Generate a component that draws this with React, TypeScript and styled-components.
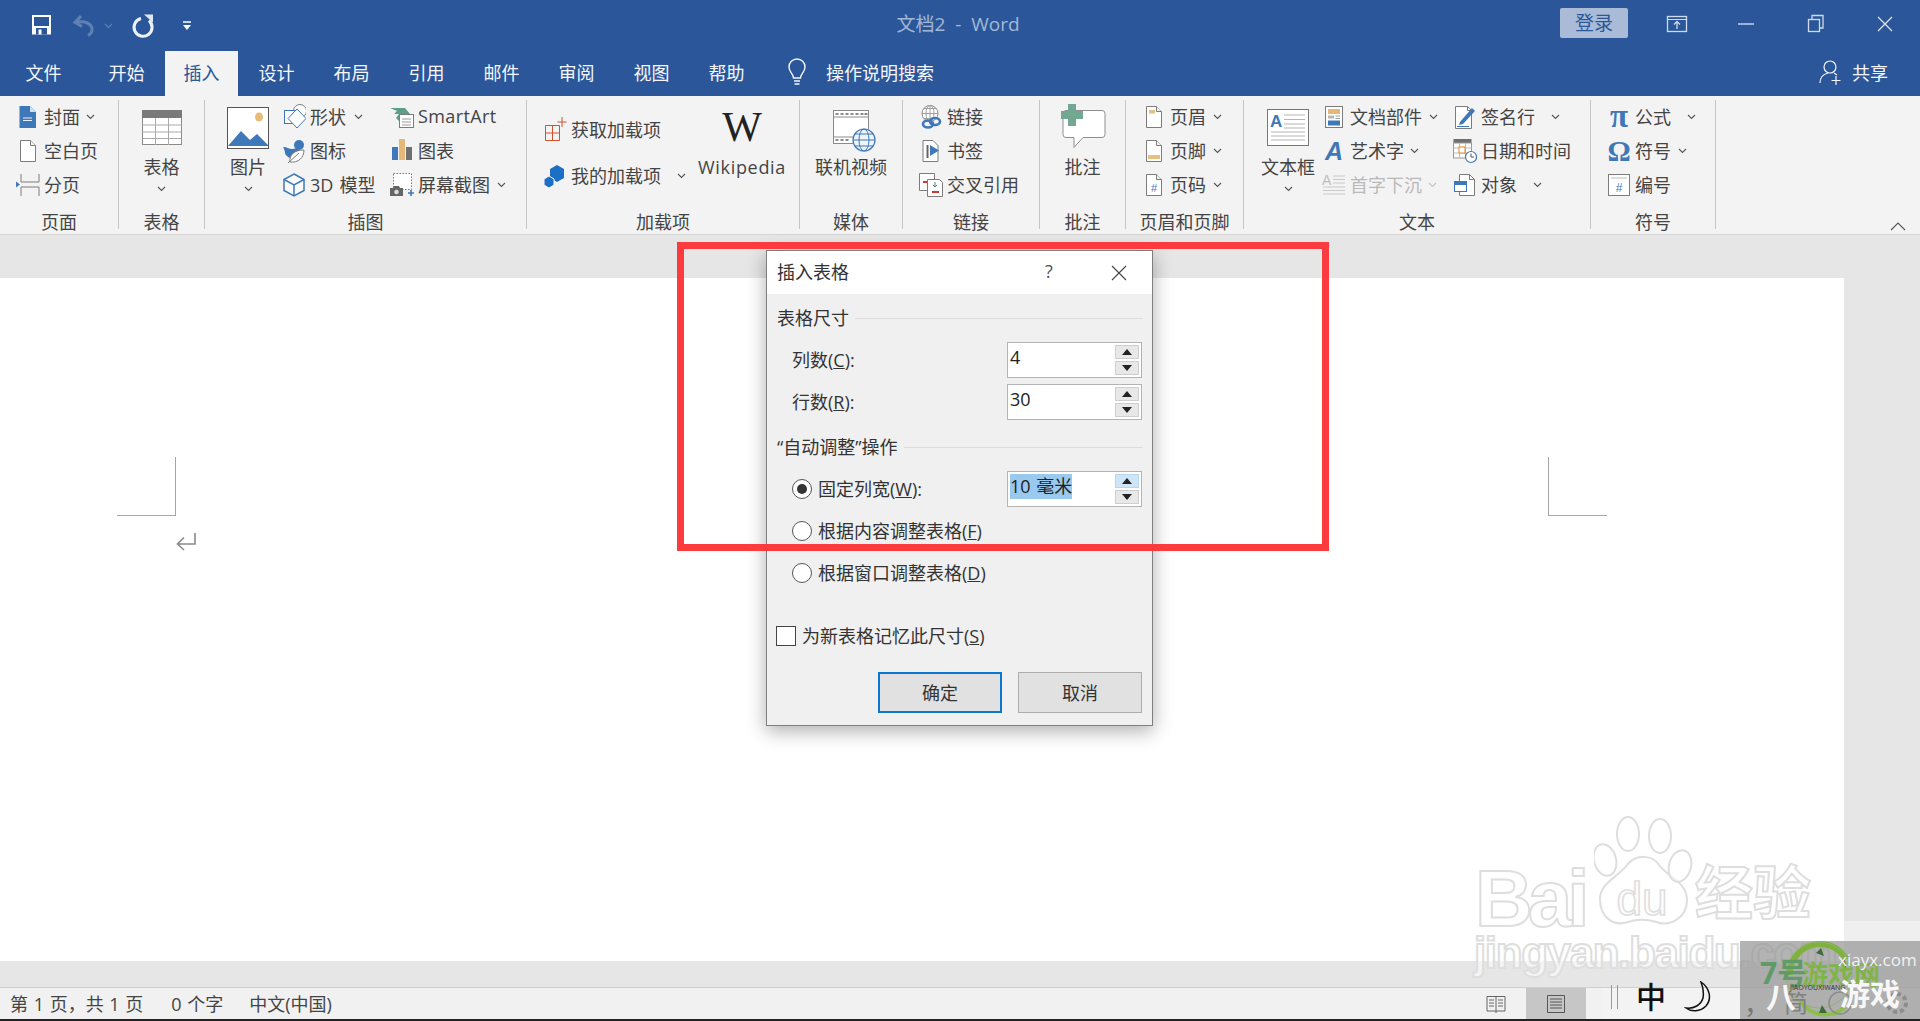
import React from "react";
import styled, { createGlobalStyle } from "styled-components";

const FONT = `"Open Sans","Noto Sans CJK SC",sans-serif`;
const BLUE = "#2b579a";
const IC = "#3f78b8";

const Global = createGlobalStyle`
  html, body { margin: 0; padding: 0; background: #fff; overflow: hidden; }
  body { font-family: ${FONT}; font-size: 18px; color: #444; }
  * { box-sizing: border-box; }
`;

const Screen = styled.div`
  position: relative; width: 1920px; height: 1021px; overflow: hidden;
  display: flex; flex-direction: column;
`;

/* title bar */
const TitleBar = styled.header`
  height: 51px; background: ${BLUE};
  display: grid; grid-template-columns: 1fr auto 1fr; align-items: center;
`;
const Qat = styled.div`display: flex; align-items: center; padding-left: 29px;`;
const QatItem = styled.span<{ $ml: number }>`display: flex; margin-left: ${p => p.$ml}px;`;
const DocTitle = styled.div`color: #a3b7d6; font-size: 19px; white-space: pre; margin-right: 4px; margin-top: -5px;`;
const WinArea = styled.div`display: flex; align-items: center; justify-content: flex-end;`;
const SignIn = styled.div`
  width: 68px; height: 30px; margin: -6px 14px 0 0; border-radius: 2px; background: #a9bbd6;
  color: ${BLUE}; display: flex; align-items: center; justify-content: center; font-size: 19px; padding-bottom: 2px;
`;
const WinBtn = styled.div`width: 69.5px; height: 30px; margin-top: -4px; display: flex; align-items: center; justify-content: center;`;

/* tabs */
const TabBar = styled.nav`
  height: 45px; background: ${BLUE}; display: flex; align-items: stretch; padding-left: 7px; padding-right: 32px;
`;
const Tab = styled.div<{ $active?: boolean; $first?: boolean }>`
  width: 73px; margin-right: ${p => (p.$first ? 10 : 2)}px;
  display: flex; align-items: center; justify-content: center;
  background: ${p => (p.$active ? "#f3f3f3" : "transparent")};
  color: ${p => (p.$active ? BLUE : "#f4f6fa")}; font-size: 18px; padding-bottom: 3px;
`;
const Search = styled.div`display: flex; align-items: center; margin-left: 22px; color: #f4f6fa; gap: 19px; padding-bottom: 3px;`;
const Share = styled.div`margin-left: auto; display: flex; align-items: center; gap: 9px; color: #f4f6fa; padding-bottom: 3px;`;

/* ribbon */
const Ribbon = styled.section`
  position: relative; height: 139px; background: #f3f3f3; border-bottom: 1px solid #d4d4d4;
  display: flex; align-items: flex-start; padding-top: 4px;
`;
const Group = styled.div<{ $w: number }>`
  width: ${p => p.$w}px; height: 129px; border-right: 1px solid #c6c6c6; display: flex; flex-direction: column;
`;
const GroupBody = styled.div<{ $pl?: number }>`
  flex: 1; display: flex; align-items: flex-start; padding-left: ${p => p.$pl ?? 0}px;
`;
const GroupLabel = styled.div`
  height: 16px; line-height: 16px; text-align: center; font-size: 18px; color: #444; white-space: nowrap; padding-top: 1px;
`;
const Big = styled.div<{ $w: number }>`
  width: ${p => p.$w}px; flex: none; display: flex; flex-direction: column; align-items: center;
`;
const BigIcon = styled.div`height: 58px; display: flex; justify-content: center; align-items: flex-start;`;
const BigText = styled.div`height: 18px; line-height: 18px; font-size: 18px; white-space: nowrap;`;
const BigChev = styled.div`margin-top: 10px; display: flex;`;
const Col = styled.div<{ $w?: number; $mt?: number }>`
  width: ${p => (p.$w ? `${p.$w}px` : "auto")}; flex: none; margin-top: ${p => p.$mt ?? 0}px; display: flex; flex-direction: column;
`;
const Row = styled.div<{ $h?: number; $off?: boolean }>`
  height: ${p => p.$h ?? 34}px; display: flex; align-items: center; white-space: nowrap;
  color: ${p => (p.$off ? "#b9b9b9" : "#444")};
`;
const RowText = styled.span`margin-bottom: 3px; word-spacing: 1.5px;`;
const Slot = styled.span`width: 32px; height: 26px; flex: none; display: flex; align-items: center; justify-content: center;`;
const ChevBox = styled.span<{ $ml: number }>`display: flex; margin-left: ${p => p.$ml}px;`;
const Latin = styled.span`letter-spacing: 0.4px;`;
const WikiLatin = styled.span`letter-spacing: 0.7px;`;
const WikiW = styled.div`
  font-family: "Liberation Serif", serif; font-weight: 400; font-size: 42px; line-height: 54px; color: #222; height: 58px;
`;
const Collapse = styled.span`position: absolute; right: 14px; bottom: 3px; display: flex;`;

/* document */
const DocArea = styled.main`
  flex: 1; background: #e6e6e6; padding-top: 43px; display: flex; flex-direction: column;
`;
const DocMain = styled.div`height: 683px; display: flex;`;
const Page = styled.div`width: 1844px; background: #fff; padding: 179px 237px 0 117px;`;
const Side = styled.div`flex: 1; display: flex; flex-direction: column; justify-content: flex-end;`;
const SideFoot = styled.div`height: 40px; background: #efefef;`;
const Marks = styled.div`display: flex; justify-content: space-between;`;
const Mark = styled.div<{ $right?: boolean }>`
  width: 59px; height: 59px; border-bottom: 1px solid #a6a6a6;
  ${p => (p.$right ? "border-left: 1px solid #a6a6a6;" : "border-right: 1px solid #a6a6a6;")}
`;
const Para = styled.div`margin: 15px 0 0 57px; display: flex;`;

/* status */
const StatusBar = styled.footer`
  height: 34px; background: #f1f1f1; border-top: 1px solid #cfcfcf; border-bottom: 2px solid #222;
  display: flex; align-items: center; padding: 0 334px 0 10px; font-size: 18px; color: #444;
`;
const StatusText = styled.span<{ $ml?: number }>`margin-left: ${p => p.$ml ?? 0}px; white-space: nowrap; word-spacing: 1px; margin-bottom: 2px;`;
const ViewSwitch = styled.div`margin-left: auto; height: 100%; display: flex;`;
const ViewBtn = styled.div<{ $active?: boolean }>`
  width: 60px; display: flex; align-items: center; justify-content: center;
  background: ${p => (p.$active ? "#c6c6c6" : "transparent")};
`;

/* dialog */
const Dialog = styled.div`
  position: absolute; left: 766px; top: 250px; width: 387px; height: 476px;
  background: #f0f0f0; border: 1px solid #7f7f7f; box-shadow: 0 5px 18px rgba(0,0,0,.32);
  display: flex; flex-direction: column; color: #333;
`;
const DlgHead = styled.div`
  height: 43px; background: #fff; display: flex; align-items: center; padding: 0 0 0 10px; font-size: 18px;
`;
const DlgTitle = styled.span`flex: 1; margin-bottom: 3px;`;
const Help = styled.span`width: 20px; text-align: center; color: #555; margin: 0 52px 3px 0;`;
const DlgClose = styled.span`display: flex; margin-right: 25px;`;
const DlgBody = styled.div`flex: 1; padding: 15px 0 0 0; display: flex; flex-direction: column;`;
const Section = styled.div<{ $mt?: number }>`
  height: 18px; line-height: 18px; margin: ${p => p.$mt ?? 0}px 9px 0 10px; display: flex; align-items: center; gap: 6px; white-space: nowrap;
`;
const SectionLine = styled.span`flex: 1; height: 1px; background: #dcdcdc;`;
const FieldRow = styled.div<{ $mt: number }>`
  height: 36px; margin-top: ${p => p.$mt}px; padding: 0 10px 0 25px; display: flex; align-items: center; white-space: nowrap;
`;
const DlgText = styled.span`margin-bottom: 2px;`;
const Field = styled.div`
  margin-left: auto; width: 135px; height: 36px; background: #fff; border: 1px solid #b4b4b4;
  display: flex; padding: 2px;
`;
const FieldValue = styled.div`flex: 1; line-height: 24px; font-size: 18px; color: #222;`;
const Selected = styled.span`display: inline-block; background: #99c9ef; height: 25px; line-height: 24px; word-spacing: 1px;`;
const Spin = styled.div`width: 24px; display: flex; flex-direction: column; gap: 2px;`;
const SpinBtn = styled.div<{ $hot?: boolean }>`
  flex: 1; background: ${p => (p.$hot ? "#cde6f7" : "#e8e8e8")}; border: 1px solid ${p => (p.$hot ? "#b5d6ee" : "#cfcfcf")};
  display: flex; align-items: center; justify-content: center;
`;
const Radio = styled.span<{ $on?: boolean }>`
  width: 20px; height: 20px; flex: none; margin-right: 6px; border-radius: 50%; background: #fff; border: 1px solid #555;
  display: flex; align-items: center; justify-content: center;
  &::after { content: ""; width: 10px; height: 10px; border-radius: 50%; background: ${p => (p.$on ? "#333" : "transparent")}; }
`;
const CheckRow = styled.div`height: 36px; margin-top: 27px; padding-left: 9px; display: flex; align-items: center; white-space: nowrap;`;
const Check = styled.span`width: 20px; height: 20px; margin-right: 6px; background: #fff; border: 1px solid #444;`;
const Actions = styled.div`margin-top: 18px; padding-right: 10px; display: flex; justify-content: flex-end; gap: 16px;`;
const Btn = styled.div<{ $primary?: boolean }>`
  width: 124px; height: 41px; background: #e1e1e1; display: flex; align-items: center; justify-content: center;
  border: ${p => (p.$primary ? "2px solid #0a78d0" : "1px solid #adadad")}; color: #333; padding-bottom: 2px;
`;

/* overlays */
const RedBox = styled.div`
  position: absolute; left: 677px; top: 242px; width: 652px; height: 309px; border: 7px solid #fb3b3e; pointer-events: none;
`;
const BaiduMark = styled.div`
  position: absolute; left: 1474px; top: 815px; width: 360px; height: 180px; pointer-events: none;
`;
const OutlineText = styled.span<{ $x: number; $y: number; $size: number; $ls?: number; $bold?: boolean }>`
  position: absolute; left: ${p => p.$x}px; top: ${p => p.$y}px; font-size: ${p => p.$size}px; line-height: 1; white-space: nowrap;
  font-family: "Liberation Sans","Noto Sans CJK SC",sans-serif; font-weight: ${p => (p.$bold ? 700 : 400)};
  letter-spacing: ${p => p.$ls ?? 0}px;
  color: rgba(255,255,255,.6); -webkit-text-stroke: 2px #dedede;
`;
const Paw = styled.svg`position: absolute; left: 120px; top: 0;`;
const Ime = styled.div`
  position: absolute; left: 1602px; top: 988px; width: 138px; height: 31px; background: #f3f3f3;
`;
const ImeBar = styled.div`
  position: absolute; left: 1602px; top: 978px; height: 38px; display: flex; align-items: center; pointer-events: none;
`;
const ImeGrips = styled.span`width: 7px; height: 24px; margin-left: 9px; border-left: 1px solid #999; border-right: 1px solid #999;`;
const ImeZh = styled.span`margin-left: 18px; font-size: 30px; font-weight: 500; line-height: 30px; color: #111;`;
const ImeMoon = styled.span`display: flex; margin-left: 18px;`;
const MarkBox = styled.div`
  position: absolute; left: 1740px; top: 941px; width: 180px; height: 78px; background: rgba(150,150,150,.72); overflow: hidden;
`;
const MarkFloat = styled.span<{ $x: number; $y: number; $size: number; $c: string; $w?: number }>`
  position: absolute; left: ${p => p.$x}px; top: ${p => p.$y}px; font-size: ${p => p.$size}px; line-height: 1; color: ${p => p.$c};
  font-weight: ${p => p.$w ?? 400}; white-space: nowrap;
`;
const MarkArt = styled.svg`position: absolute; left: 0; top: 0;`;

/* icons */
const Chev = ({ c = "#555" }: { c?: string }) => (
  <svg width="9" height="6" viewBox="0 0 9 6"><path d="M1 1l3.5 3.5L8 1" fill="none" stroke={c} strokeWidth="1.1" /></svg>
);
const Ico = ({ children }: { children: React.ReactNode }) => (
  <svg width="24" height="26" viewBox="0 0 24 26">{children}</svg>
);
const GR = "#7c7c7c";
const docP = "M4.5 2.5h10l5 5v16h-15z";
const Doc = () => (<><path d={docP} fill="#fff" stroke={GR} /><path d="M14.5 2.5v5h5" fill="#f3f3f3" stroke={GR} /></>);

const iCover = <Ico><path d="M3.5 2H14l6 6v16H3.5z" fill={IC} /><path d="M14 2v6h6z" fill="#cfe0f2" /><path d="M7 14h9M7 16.5h9" stroke="#e8f0f8" strokeWidth="1" /></Ico>;
const iBlank = <Ico><Doc /></Ico>;
const iBreak = <Ico><path d="M5 2v8h18V2M5 24V15h18v9" fill="none" stroke={GR} /><path d="M0 9.5l4 3-4 3z" fill={IC} /></Ico>;
const iShapes = <Ico><circle cx="18" cy="7" r="6.5" fill="#fff" stroke={GR} /><rect x="2.5" y="6.5" width="12" height="13" fill="#fff" stroke={IC} /><path d="M16 5l9 9.5-9 9.5-9-9.5z" transform="translate(-1 0)" fill="#fff" stroke={IC} /></Ico>;
const iIcons = <Ico><circle cx="17" cy="7" r="5" fill={IC} /><path d="M1 9c4 0 6 2 9 2l7-1c2 4 0 9-5 10-3 1-8-1-9-5 0-2-1-4-2-6z" fill={IC} /><path d="M8 24c-1-7 4-12 14-12 0 8-6 13-14 12z" fill="#fff" stroke={GR} /><path d="M6 25l11-10" stroke={GR} /></Ico>;
const iCube = <Ico><path d="M12 2l10 5.5v11L12 24 2 18.5v-11z" fill="#fbfbfb" stroke={IC} strokeWidth="1.5" /><path d="M2 7.5L12 13l10-5.5M12 13v11" fill="none" stroke={IC} strokeWidth="1.5" /></Ico>;
const iSmart = <Ico><path d="M0 4h15l5 6h-8l-3 7-3-3 3-4H4l3-3z" fill="#5c9e8a" /><rect x="9.5" y="10.5" width="14" height="13" fill="#fff" stroke={GR} /><path d="M12 15h9M12 18h9M12 21h9" stroke="#999" /></Ico>;
const iChart = <Ico><rect x="2" y="9" width="6" height="13" fill={IC} /><rect x="9" y="1" width="6" height="21" fill="#e6b877" /><rect x="16" y="9" width="6" height="13" fill="#6f6f6f" /></Ico>;
const iShot = <Ico><rect x="3.5" y="1.5" width="18" height="16" fill="#fff" stroke="#777" strokeDasharray="1.5 1.5" /><path d="M0 16h3l1-2h5l1 2h3v8H0z" fill="#666" /><circle cx="6.5" cy="20" r="2.3" fill="#ddd" /><path d="M18 21h6M21 18v6" stroke={IC} strokeWidth="1.6" /></Ico>;
const iAddGet = <Ico><path d="M2.5 8.5h14v15h-14zM2.5 16h14M9.500 8.500v15" fill="none" stroke="#d4512f" /><path d="M19 0v10M14.500 5h9" stroke="#d4512f" /></Ico>;
const iAddMy = <Ico><path d="M14 2l7 4v9l-7 4-7-4V6z" fill="#1c6fc2" /><path d="M6 13l5 3v6l-5 3-5-3v-6z" fill="#1c6fc2" stroke="#f3f3f3" /></Ico>;
const iLink = <Ico><circle cx="11" cy="9.5" r="8" fill="#fff" stroke="#8a8a8a" /><path d="M3 9.5h16M11 1.5v16M5 4.5h12M5 14.500h12" stroke="#a0a0a0" /><ellipse cx="11" cy="9.5" rx="4" ry="8" fill="none" stroke="#a0a0a0" /><ellipse cx="9" cy="20" rx="5" ry="3.5" fill="none" stroke={IC} strokeWidth="2.6" /><ellipse cx="16" cy="17.500" rx="5" ry="3.5" fill="none" stroke={IC} strokeWidth="2.6" /></Ico>;
const iMark = <Ico><path d="M4 2.5h10l5 5v16H4z" fill="#fff" stroke={GR} /><path d="M8.500 7v13" stroke="#666" strokeWidth="2" /><path d="M11 7l9 5.5-9 5.5z" fill={IC} /></Ico>;
const iCross = <Ico><path d="M0.5 1.5h15v17H0.5z" fill="#fff" stroke={GR} /><path d="M4 10h6" stroke="#d0392f" strokeWidth="2" /><path d="M8.5 7.5h12l3 3v14h-15z" fill="#fff" stroke={GR} /><path d="M16 10v5M14 13l2 2 2-2" fill="none" stroke="#4a8f6f" /><path d="M13 20h7" stroke="#d0392f" strokeWidth="2" /></Ico>;
const iHead = <Ico><Doc /><rect x="7" y="6" width="6" height="3.5" fill="#e6c07f" /></Ico>;
const iFoot = <Ico><Doc /><rect x="6" y="17" width="12" height="4" fill="#e6c07f" /></Ico>;
const iNum = <Ico><Doc /><text x="12" y="20" fontSize="11" textAnchor="middle" fill={IC} fontFamily="Liberation Sans">#</text></Ico>;
const iParts = <Ico><rect x="3.5" y="2.5" width="17" height="21" fill="#fff" stroke={GR} /><rect x="6" y="5" width="12" height="5" fill="#e6b877" /><rect x="6" y="11.5" width="6" height="3" fill="#b7b7b7" /><path d="M13.5 12h4.500M13.5 14.500h4.500" stroke="#999" /><rect x="6" y="16.5" width="12" height="5" fill={IC} /></Ico>;
const iArt = <Ico><text x="12" y="22" fontSize="25" fontWeight="700" fontStyle="italic" textAnchor="middle" fill={IC} fontFamily="Liberation Sans">A</text></Ico>;
const iDrop = <Ico><text x="0" y="13" fontSize="14" fill="#bdbdbd" fontFamily="Liberation Sans">A</text><path d="M11 4h12M11 7.500h12M11 11h12M1 15h22M1 18.500h22M1 22h22" stroke="#c9c9c9" /></Ico>;
const iSign = <Ico><path d="M2.5 2.5h12l4 4v18h-16z" fill="#fff" stroke={GR} /><path d="M14.5 2.5v4h4" fill="none" stroke={GR} /><path d="M7 18L19 4l3 3-12 13-4 1z" fill={IC} /><path d="M4 22.5h12" stroke={IC} /></Ico>;
const iDate = <Ico><rect x="0.5" y="1" width="18" height="4" fill="#6f6f6f" /><rect x="0.5" y="5" width="18" height="15" fill="#fff" stroke="#999" /><path d="M6.5 5v15M12.5 5v15M0.5 10h18M0.5 15h18" stroke="#bbb" /><rect x="6" y="9" width="6" height="6" fill="#fff" stroke="#e08a2c" /><circle cx="18" cy="19" r="5.5" fill="#fff" stroke={IC} strokeWidth="1.2" /><path d="M18 15.5V19h3" fill="none" stroke="#555" /></Ico>;
const iObj = <Ico><path d="M6.5 2.5h10l5 5v16h-15z" fill="#fff" stroke={GR} /><path d="M16.5 2.5v5h5" fill="none" stroke={GR} /><rect x="1.5" y="9.5" width="12" height="10" fill="#fff" stroke={IC} /><rect x="1" y="9" width="13" height="4" fill={IC} /></Ico>;
const iPi = <Ico><text x="12" y="23" fontSize="33" fontWeight="700" textAnchor="middle" fill={IC} fontFamily="Liberation Serif">π</text></Ico>;
const iOm = <Ico><text x="12" y="23" fontSize="29" fontWeight="700" textAnchor="middle" fill={IC} fontFamily="Liberation Serif">Ω</text></Ico>;
const iHash = <Ico><rect x="1.5" y="2.5" width="21" height="21" fill="#fff" stroke={GR} /><path d="M4 6h16" stroke="#bbb" /><text x="12" y="20" fontSize="12" textAnchor="middle" fill={IC} fontFamily="Liberation Sans">#</text></Ico>;

const BigTable = (
  <svg width="44" height="58" viewBox="0 0 44 58">
    <rect x="2.5" y="10.5" width="39" height="34" fill="#fff" stroke="#8a8a8a" />
    <rect x="2" y="10" width="40" height="8" fill="#7a7a7a" />
    <path d="M2.5 25h39M2.5 32h39M2.5 38.5h39M15.5 18v27M28.5 18v27" stroke="#aaa" />
  </svg>
);
const BigPic = (
  <svg width="46" height="58" viewBox="0 0 46 58">
    <rect x="2.5" y="7.5" width="41" height="41" fill="#fff" stroke="#555" />
    <ellipse cx="34" cy="17" rx="4" ry="4.5" fill="#e8bb78" />
    <path d="M3 46l13-15 9 9 7-6 11 11v1H3z" fill={IC} />
  </svg>
);
const BigVideo = (
  <svg width="52" height="58" viewBox="0 0 52 58">
    <rect x="8.5" y="10.5" width="35" height="33" fill="#fff" stroke="#8a8a8a" />
    <path d="M8.5 17h35M8.5 37h35" stroke="#8a8a8a" />
    <path d="M12 13v2M17 13v2M22 13v2M27 13v2M32 13v2M37 13v2M41 13v2M12 39v2M17 39v2M22 39v2" stroke="#8a8a8a" strokeWidth="3" />
    <circle cx="39" cy="40" r="11" fill="#eef4fa" stroke={IC} strokeWidth="1.2" />
    <ellipse cx="39" cy="40" rx="5" ry="11" fill="none" stroke={IC} />
    <path d="M28 40h22M30 34h18M30 46h18" stroke={IC} />
  </svg>
);
const BigComment = (
  <svg width="52" height="58" viewBox="0 0 52 58">
    <path d="M9 10.5h36a3 3 0 0 1 3 3v21a3 3 0 0 1-3 3H26l-9 10v-10H9a3 3 0 0 1-3-3v-21a3 3 0 0 1 3-3z" fill="#fff" stroke="#8f8f8f" />
    <path d="M11 4h8v7h7v8h-7v7h-8v-7H4v-8h7z" fill="#72a892" />
  </svg>
);
const BigBox = (
  <svg width="46" height="58" viewBox="0 0 46 58">
    <rect x="2.5" y="9.5" width="41" height="36" fill="#fff" stroke="#777" />
    <text x="5" y="27" fontSize="17" fontWeight="700" fill={IC} fontFamily="Liberation Sans">A</text>
    <path d="M19 15h21M19 19.5h21M19 24h21M19 28h21M6 32h34M6 36h34M6 40h34" stroke="#b5b5b5" />
  </svg>
);

const Small = ({ icon, text, ml, off }: { icon: React.ReactNode; text: React.ReactNode; ml?: number; off?: boolean }) => (
  <Row $off={off}>
    <Slot>{icon}</Slot>
    <RowText>{text}</RowText>
    {ml !== undefined && <ChevBox $ml={ml}><Chev c={off ? "#c4c4c4" : "#555"} /></ChevBox>}
  </Row>
);
const BigBtn = ({ w, icon, text, chev }: { w: number; icon: React.ReactNode; text: string; chev?: boolean }) => (
  <Big $w={w}>
    <BigIcon>{icon}</BigIcon>
    <BigText>{text}</BigText>
    {chev && <BigChev><Chev /></BigChev>}
  </Big>
);

const TABS = ["开始", "插入", "设计", "布局", "引用", "邮件", "审阅", "视图", "帮助"];

export default function App() {
  return (
    <Screen>
      <Global />
      <TitleBar>
        <Qat>
          <QatItem $ml={0}>
            <svg width="24" height="26" viewBox="0 0 24 26"><path d="M3 2h19v19.500H3z" fill="#fff" /><rect x="5" y="4" width="15" height="9" fill="#2b579a" /><rect x="7" y="15" width="11" height="6.500" fill="#2b579a" /><rect x="9.500" y="16.500" width="3" height="5" fill="#fff" /></svg>
          </QatItem>
          <QatItem $ml={19}>
            <svg width="24" height="26" viewBox="0 0 24 26"><path d="M9 3L3 9.500l7 4M4 9.500c9-2 16 1 16 7 0 3-2 5-4 6" fill="none" stroke="#5f80b2" strokeWidth="3" /></svg>
          </QatItem>
          <QatItem $ml={8}><Chev c="#5f80b2" /></QatItem>
          <QatItem $ml={18}>
            <svg width="24" height="26" viewBox="0 0 24 26"><path d="M10 5.500a9 9 0 1 0 8 2" fill="none" stroke="#eef2f8" strokeWidth="3" /><path d="M13 1.500h9v8z" fill="#dfe7f2" /></svg>
          </QatItem>
          <QatItem $ml={26}>
            <svg width="12" height="12" viewBox="0 0 12 12"><path d="M2 2h8" stroke="#fff" strokeWidth="1.500" /><path d="M2 5h8L6 10z" fill="#fff" /></svg>
          </QatItem>
        </Qat>
        <DocTitle>文档2  -  Word</DocTitle>
        <WinArea>
          <SignIn>登录</SignIn>
          <WinBtn><svg width="22" height="20" viewBox="0 0 22 20"><rect x="1.5" y="2.5" width="19" height="15" fill="none" stroke="#cfdaeb" strokeWidth="1.3" /><path d="M1.5 5.5h19" stroke="#cfdaeb" /><path d="M11 15V8M8 10.500L11 7.500l3 3" fill="none" stroke="#cfdaeb" strokeWidth="1.3" /></svg></WinBtn>
          <WinBtn><svg width="18" height="4" viewBox="0 0 18 4"><path d="M1 2h16" stroke="#cfdaeb" strokeWidth="1.4" /></svg></WinBtn>
          <WinBtn><svg width="18" height="20" viewBox="0 0 18 20"><rect x="1.5" y="5.5" width="11" height="12" fill="none" stroke="#cfdaeb" strokeWidth="1.3" /><path d="M5 5V1.5h11V14h-3" fill="none" stroke="#cfdaeb" strokeWidth="1.3" /></svg></WinBtn>
          <WinBtn><svg width="18" height="18" viewBox="0 0 18 18"><path d="M2 2l14 14M16 2L2 16" stroke="#dfe6f1" strokeWidth="1.3" /></svg></WinBtn>
        </WinArea>
      </TitleBar>

      <TabBar>
        <Tab $first>文件</Tab>
        {TABS.map(t => <Tab key={t} $active={t === "插入"}>{t}</Tab>)}
        <Search>
          <svg width="20" height="28" viewBox="0 0 20 28"><path d="M6.5 20c0-4-4.500-6-4.500-11a8 8 0 0 1 16 0c0 5-4.500 7-4.500 11z" fill="none" stroke="#f4f6fa" strokeWidth="1.4" /><path d="M7 23h6M7.500 26h5" stroke="#f4f6fa" strokeWidth="1.5" /></svg>
          <span>操作说明搜索</span>
        </Search>
        <Share>
          <svg width="24" height="26" viewBox="0 0 24 26"><circle cx="11" cy="8" r="6" fill="none" stroke="#f4f6fa" strokeWidth="1.2" /><path d="M1 24c0-6 4-9 8-10M15 14l3 2" fill="none" stroke="#f4f6fa" strokeWidth="1.2" /><path d="M17 17v9M12.500 21.500h9" stroke="#f4f6fa" strokeWidth="1.2" /></svg>
          <span>共享</span>
        </Share>
      </TabBar>

      <Ribbon>
        <Group $w={119}>
          <GroupBody $pl={12}>
            <Col>
              <Small icon={iCover} text="封面" ml={6} />
              <Small icon={iBlank} text="空白页" />
              <Small icon={iBreak} text="分页" />
            </Col>
          </GroupBody>
          <GroupLabel>页面</GroupLabel>
        </Group>
        <Group $w={86}>
          <GroupBody><BigBtn w={85} icon={BigTable} text="表格" chev /></GroupBody>
          <GroupLabel>表格</GroupLabel>
        </Group>
        <Group $w={322}>
          <GroupBody $pl={13}>
            <BigBtn w={60} icon={BigPic} text="图片" chev />
            <Col $w={108}>
              <Small icon={iShapes} text="形状" ml={8} />
              <Small icon={iIcons} text="图标" />
              <Small icon={iCube} text="3D 模型" />
            </Col>
            <Col>
              <Small icon={iSmart} text={<Latin>SmartArt</Latin>} />
              <Small icon={iChart} text="图表" />
              <Small icon={iShot} text="屏幕截图" ml={7} />
            </Col>
          </GroupBody>
          <GroupLabel>插图</GroupLabel>
        </Group>
        <Group $w={273}>
          <GroupBody $pl={12}>
            <Col $w={153} $mt={7}>
              <Row $h={46}><Slot>{iAddGet}</Slot><RowText>获取加载项</RowText></Row>
              <Row $h={46}><Slot>{iAddMy}</Slot><RowText>我的加载项</RowText><ChevBox $ml={16}><Chev /></ChevBox></Row>
            </Col>
            <Big $w={100}>
              <BigIcon><WikiW>W</WikiW></BigIcon>
              <BigText><WikiLatin>Wikipedia</WikiLatin></BigText>
            </Big>
          </GroupBody>
          <GroupLabel>加载项</GroupLabel>
        </Group>
        <Group $w={103}>
          <GroupBody><BigBtn w={102} icon={BigVideo} text="联机视频" /></GroupBody>
          <GroupLabel>媒体</GroupLabel>
        </Group>
        <Group $w={137}>
          <GroupBody $pl={12}>
            <Col>
              <Small icon={iLink} text="链接" />
              <Small icon={iMark} text="书签" />
              <Small icon={iCross} text="交叉引用" />
            </Col>
          </GroupBody>
          <GroupLabel>链接</GroupLabel>
        </Group>
        <Group $w={86}>
          <GroupBody><BigBtn w={85} icon={BigComment} text="批注" /></GroupBody>
          <GroupLabel>批注</GroupLabel>
        </Group>
        <Group $w={118}>
          <GroupBody $pl={12}>
            <Col>
              <Small icon={iHead} text="页眉" ml={7} />
              <Small icon={iFoot} text="页脚" ml={7} />
              <Small icon={iNum} text="页码" ml={7} />
            </Col>
          </GroupBody>
          <GroupLabel>页眉和页脚</GroupLabel>
        </Group>
        <Group $w={347}>
          <GroupBody $pl={14}>
            <BigBtn w={60} icon={BigBox} text="文本框" chev />
            <Col $w={131}>
              <Small icon={iParts} text="文档部件" ml={7} />
              <Small icon={iArt} text="艺术字" ml={6} />
              <Small icon={iDrop} text="首字下沉" ml={6} off />
            </Col>
            <Col>
              <Small icon={iSign} text="签名行" ml={16} />
              <Small icon={iDate} text="日期和时间" />
              <Small icon={iObj} text="对象" ml={16} />
            </Col>
          </GroupBody>
          <GroupLabel>文本</GroupLabel>
        </Group>
        <Group $w={125}>
          <GroupBody $pl={12}>
            <Col>
              <Small icon={iPi} text="公式" ml={16} />
              <Small icon={iOm} text="符号" ml={7} />
              <Small icon={iHash} text="编号" />
            </Col>
          </GroupBody>
          <GroupLabel>符号</GroupLabel>
        </Group>
        <Collapse><svg width="16" height="10" viewBox="0 0 16 10"><path d="M1 9l7-7 7 7" fill="none" stroke="#555" strokeWidth="1.1" /></svg></Collapse>
      </Ribbon>

      <DocArea>
        <DocMain>
          <Page>
            <Marks><Mark /><Mark $right /></Marks>
            <Para><svg width="24" height="20" viewBox="0 0 24 20"><path d="M21 2v11H4M10 6.5L3.5 13l6.5 6" fill="none" stroke="#8a8a8a" strokeWidth="1.6" /></svg></Para>
          </Page>
          <Side><SideFoot /></Side>
        </DocMain>
      </DocArea>

      <StatusBar>
        <StatusText>第 1 页，共 1 页</StatusText>
        <StatusText $ml={28}>0 个字</StatusText>
        <StatusText $ml={26}>中文(中国)</StatusText>
        <ViewSwitch>
          <ViewBtn><svg width="20" height="20" viewBox="0 0 20 20"><path d="M1 2.5h18v14.500H1zM10 2.5V19M3 6h5M3 9h5M3 12h5M12 6h5M12 9h5M12 12h5" fill="none" stroke="#666" /></svg></ViewBtn>
          <ViewBtn $active><svg width="20" height="20" viewBox="0 0 20 20"><path d="M1.5 1.5h17v17h-17zM4 5h12M4 8h12M4 11h12M4 14h12" fill="none" stroke="#555" /></svg></ViewBtn>
        </ViewSwitch>
      </StatusBar>

      <Dialog>
        <DlgHead>
          <DlgTitle>插入表格</DlgTitle>
          <Help>?</Help>
          <DlgClose><svg width="16" height="16" viewBox="0 0 16 16"><path d="M1 1l14 14M15 1L1 15" stroke="#444" strokeWidth="1.1" /></svg></DlgClose>
        </DlgHead>
        <DlgBody>
          <Section>表格尺寸<SectionLine /></Section>
          <FieldRow $mt={15}>
            <DlgText>列数(<u>C</u>):</DlgText>
            <Field><FieldValue>4</FieldValue><Spin><SpinBtn><Up /></SpinBtn><SpinBtn><Down /></SpinBtn></Spin></Field>
          </FieldRow>
          <FieldRow $mt={6}>
            <DlgText>行数(<u>R</u>):</DlgText>
            <Field><FieldValue>30</FieldValue><Spin><SpinBtn><Up /></SpinBtn><SpinBtn><Down /></SpinBtn></Spin></Field>
          </FieldRow>
          <Section $mt={18}>“自动调整”操作<SectionLine /></Section>
          <FieldRow $mt={15}>
            <Radio $on /><DlgText>固定列宽(<u>W</u>):</DlgText>
            <Field><FieldValue><Selected>10 毫米</Selected></FieldValue><Spin><SpinBtn $hot><Up /></SpinBtn><SpinBtn><Down /></SpinBtn></Spin></Field>
          </FieldRow>
          <FieldRow $mt={6}><Radio /><DlgText>根据内容调整表格(<u>F</u>)</DlgText></FieldRow>
          <FieldRow $mt={6}><Radio /><DlgText>根据窗口调整表格(<u>D</u>)</DlgText></FieldRow>
          <CheckRow><Check /><DlgText>为新表格记忆此尺寸(<u>S</u>)</DlgText></CheckRow>
          <Actions>
            <Btn $primary>确定</Btn>
            <Btn>取消</Btn>
          </Actions>
        </DlgBody>
      </Dialog>

      <RedBox />

      <BaiduMark>
        <OutlineText $x={1} $y={44} $size={80} $ls={-5} $bold>Bai</OutlineText>
        <Paw width="110" height="120" viewBox="0 0 110 120">
          <g fill="#fff" fillOpacity=".6" stroke="#dedede" strokeWidth="2">
            <path d="M6 84c0-16 18-22 27-34 9-11 25-11 33 1 8 11 27 16 27 34 0 18-17 27-31 22-9-3-19-3-28 0C19 112 6 102 6 84z" />
            <ellipse cx="11" cy="45" rx="11" ry="16" transform="rotate(-15 11 45)" />
            <ellipse cx="34" cy="19" rx="11" ry="17" />
            <ellipse cx="66" cy="21" rx="11" ry="17" />
            <ellipse cx="86" cy="51" rx="11" ry="16" transform="rotate(15 86 51)" />
          </g>
          <text x="48" y="100" fontSize="46" textAnchor="middle" fontFamily="Liberation Sans" fill="#fff" stroke="#dedede" strokeWidth="1.6">du</text>
        </Paw>
        <OutlineText $x={221} $y={50} $size={58} $bold>经验</OutlineText>
        <OutlineText $x={0} $y={116} $size={44} $bold $ls={-1.4}>jingyan.baidu.com</OutlineText>
      </BaiduMark>

      <Ime />
      <ImeBar>
        <ImeGrips />
        <ImeZh>中</ImeZh>
        <ImeMoon><svg width="30" height="32" viewBox="0 0 30 32"><path d="M17 1c9 6 11 17 5 24-6 6-15 6-20 2 8 1 15-3 17-10 1-6 0-11-2-16z" fill="none" stroke="#111" strokeWidth="1.5" /></svg></ImeMoon>
      </ImeBar>

      <MarkBox>
        <MarkArt width="180" height="78" viewBox="0 0 180 78">
          <path d="M50 34a30 30 0 0 1 56-16" fill="none" stroke="#7fb23c" strokeWidth="6" />
          <path d="M60 60a30 30 0 0 0 45 6" fill="none" stroke="#8bbf4a" strokeWidth="4" />
          <circle cx="79" cy="34" r="33" fill="none" stroke="#8db56c" strokeWidth="1" />
          <path d="M76 12l5-5 3 8zM100 22l5-3 1 8zM82 64l5 8h-8z" fill="#3f6b3a" />
          <circle cx="100" cy="62" r="11" fill="none" stroke="#8c8c8c" strokeWidth="1.5" />
          <circle cx="157" cy="62" r="9" fill="none" stroke="#8c8c8c" strokeWidth="4" strokeDasharray="4 3" />
        </MarkArt>
        <MarkFloat $x={-7} $y={47} $size={18} $c="#777">°</MarkFloat>
        <MarkFloat $x={4} $y={50} $size={26} $c="#777">，</MarkFloat>
        <MarkFloat $x={44} $y={50} $size={24} $c="#808080">简</MarkFloat>
        <MarkFloat $x={20} $y={17} $size={30} $c="#5f9a68" $w={700}>7号</MarkFloat>
        <MarkFloat $x={62} $y={20} $size={26} $c="#7fb548" $w={700}>游戏网</MarkFloat>
        <MarkFloat $x={98} $y={10} $size={17} $c="#f2f2f2">xiayx.com</MarkFloat>
        <MarkFloat $x={50} $y={43} $size={7} $c="#333">JIAOYOUXIWANG</MarkFloat>
        <MarkFloat $x={100} $y={38} $size={30} $c="#f7f7f7" $w={700}>游戏</MarkFloat>
        <MarkFloat $x={26} $y={41} $size={30} $c="#f7f7f7" $w={700}>八</MarkFloat>
      </MarkBox>
    </Screen>
  );
}

function Up() {
  return <svg width="10" height="6" viewBox="0 0 10 6"><path d="M5 0l5 6H0z" fill="#222" /></svg>;
}
function Down() {
  return <svg width="10" height="6" viewBox="0 0 10 6"><path d="M5 6L0 0h10z" fill="#222" /></svg>;
}
